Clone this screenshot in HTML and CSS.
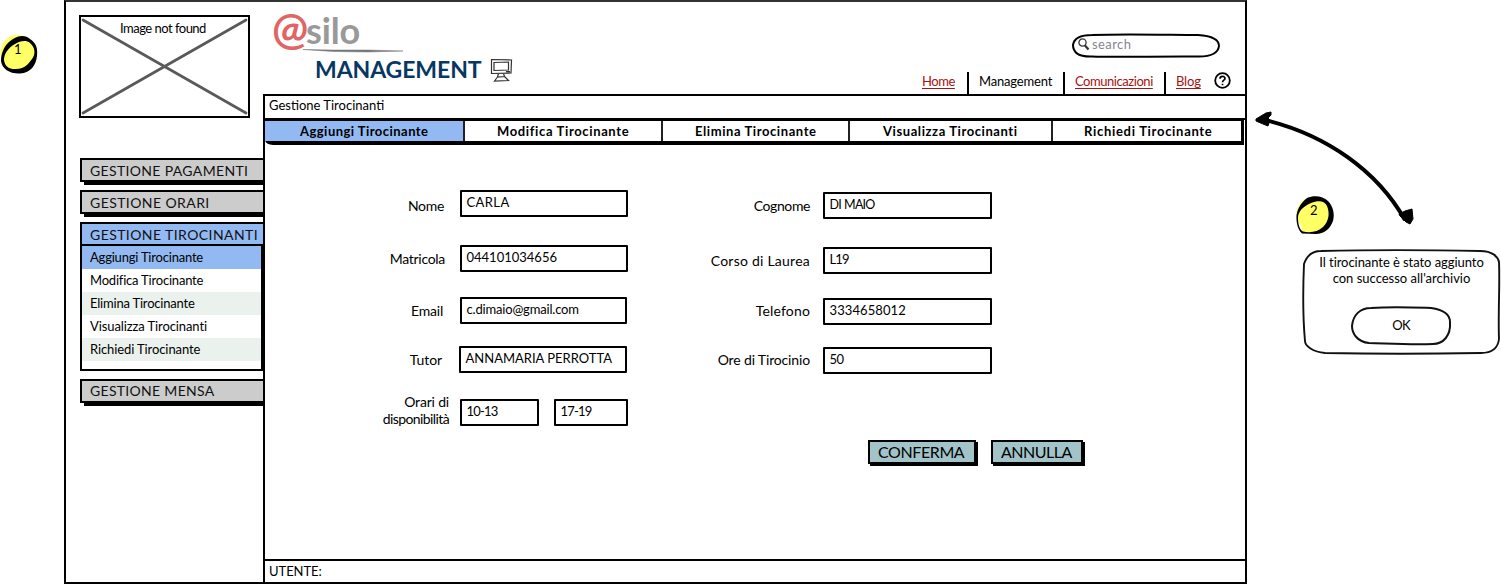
FILE: index.html
```html
<!DOCTYPE html>
<html lang="it">
<head>
<meta charset="utf-8">
<title>@silo Management</title>
<link rel="stylesheet" href="styles.css">
</head>
<body>
<div class="canvas">
  <div class="gutter">
    <div class="note note-one">
      <svg class="note-shape" viewBox="0 0 38 41"><ellipse cx="17" cy="18" rx="16.5" ry="17" fill="#ffff66"/><ellipse cx="18.500" cy="21" rx="17" ry="17.500" fill="#ffff66"/><path fill-rule="evenodd" d="M13 5C19 1 26 1 30 5C36 9 38 14 37 22C36 31 31 39 20 39.500C10 40 2 35 1 27C1 17 6 9 13 5ZM15 10C8 14 4 20 4 26C5 33 10 35.500 16 35C25 35 29 29 32 25C36 20 35 13 30 9C26 5.500 20 7 15 10Z"/></svg>
      <span class="note-num">1</span>
    </div>
  </div>

  <div class="frame">
    <aside class="sidebar">
      <div class="image-box">
        <svg class="cross" viewBox="0 0 171 103"><path d="M4 5L167 98M4 98L167 5" stroke="#595959" stroke-width="2.700" stroke-linecap="round"/></svg>
        <span class="image-text">Image not found</span>
      </div>
      <div class="menu">
        <div class="menu-button pagamenti">GESTIONE PAGAMENTI</div>
        <div class="menu-button orari">GESTIONE ORARI</div>
        <div class="menu-group">
          <div class="menu-button active">GESTIONE TIROCINANTI</div>
          <ul class="submenu">
            <li class="selected">Aggiungi Tirocinante</li>
            <li>Modifica Tirocinante</li>
            <li class="stripe">Elimina Tirocinante</li>
            <li class="visualizza">Visualizza Tirocinanti</li>
            <li class="stripe richiedi">Richiedi Tirocinante</li>
          </ul>
        </div>
        <div class="menu-button mensa">GESTIONE MENSA</div>
      </div>
    </aside>

    <div class="main">
      <header class="header">
        <div class="brand">
          <div class="logo"><span class="logo-at">@</span><span class="logo-name">silo</span></div>
          <svg class="swash" viewBox="0 0 101 4"><path d="M0 .5L30 1L65 1L100 2L65 3L30 2.500Z" fill="#777" stroke="#777" stroke-width=".5"/></svg>
          <div class="title-row">
            <span class="title">MANAGEMENT</span>
            <svg class="monitor" viewBox="0 0 23 25" fill="none" stroke="#333" stroke-width="1.200"><path d="M1.500 1.500L21.500 2L21 15L1.500 15.500ZM4 4.500L18.500 4V12L4 12.500ZM8.500 15.500L7.500 19L14.500 18.500L13.500 15.500M7.500 19L4.500 23L18.500 22.500L14.500 18.500M16 13.700H20"/></svg>
          </div>
        </div>
        <div class="header-right">
          <div class="search">
            <svg class="search-shape" viewBox="0 0 148 25"><path d="M20 2C55 .500 100 2 126 2C142 3 147 8 147 13C146 21 138 23.500 127 23.500C90 23 50 24.500 20 23.500C6 24 1 19 1 12C2 5 8 2 20 2Z" fill="#fff" stroke="#000" stroke-width="2"/></svg>
            <svg class="lens" viewBox="0 0 12 13" fill="none"><circle cx="4.500" cy="4.500" r="3.600" stroke="#333" stroke-width="1.300"/><path d="M7 7.500L10.500 11.500" stroke="#333" stroke-width="2.200"/></svg>
            <span class="search-text">search</span>
          </div>
          <nav class="nav">
            <a class="nav-home">Home</a><i class="sep"></i>
            <span class="nav-man">Management</span><i class="sep"></i>
            <a class="nav-com">Comunicazioni</a><i class="sep"></i>
            <a class="nav-blog">Blog</a>
            <svg class="help" viewBox="0 0 17 17" fill="none" stroke="#000"><circle cx="8.500" cy="8.500" r="7.300" stroke-width="1.800"/><path d="M6 6.800C6 3.600 11 3.700 11 6.500C11 8.200 8.500 8.200 8.500 10.300M8.500 11.700V13.300" stroke-width="1.700"/></svg>
          </nav>
        </div>
      </header>

      <section class="panel">
        <div class="crumb">Gestione Tirocinanti</div>
        <div class="tabs">
          <div class="tab tab-add">Aggiungi Tirocinante</div>
          <div class="tab tab-edit">Modifica Tirocinante</div>
          <div class="tab tab-del">Elimina Tirocinante</div>
          <div class="tab tab-view">Visualizza Tirocinanti</div>
          <div class="tab tab-ask">Richiedi Tirocinante</div>
        </div>
        <div class="form">
          <div class="column left">
            <div class="row nome"><label>Nome</label><div class="field">CARLA</div></div>
            <div class="row matricola"><label>Matricola</label><div class="field">044101034656</div></div>
            <div class="row email"><label>Email</label><div class="field">c.dimaio@gmail.com</div></div>
            <div class="row tutor"><label>Tutor</label><div class="field">ANNAMARIA PERROTTA</div></div>
            <div class="row hours"><label><span class="hours-a">Orari di</span><br>disponibilità</label><div class="field from">10-13</div><div class="field to">17-19</div></div>
          </div>
          <div class="column right">
            <div class="row cognome"><label>Cognome</label><div class="field">DI MAIO</div></div>
            <div class="row corso"><label>Corso di Laurea</label><div class="field">L19</div></div>
            <div class="row telefono"><label>Telefono</label><div class="field">3334658012</div></div>
            <div class="row ore"><label>Ore di Tirocinio</label><div class="field">50</div></div>
            <div class="actions">
              <div class="action confirm">CONFERMA</div>
              <div class="action cancel">ANNULLA</div>
            </div>
          </div>
        </div>
        <footer class="footer">UTENTE:</footer>
      </section>
    </div>
  </div>

  <div class="notes">
    <svg class="arrow" viewBox="0 0 160 116"><path d="M13 9C79 24 130 62 157 110" fill="none" stroke="#000" stroke-width="4"/><path d="M8 9L18 3L23 2L23 5L20 8L22 10L20 16L15 14L8 11Z" stroke="#000" stroke-linejoin="round"/><path d="M151 104L157 101L164 99L165 109L162 114L158 112L152 106Z" stroke="#000" stroke-linejoin="round"/></svg>
    <div class="note note-two">
      <svg class="note-shape" viewBox="0 0 38 41"><circle cx="17.500" cy="19" r="17" fill="#ffff66"/><path d="M4 21L17 6L33 12L33 30L20 37L6 37Z" fill="#ffff66"/><path fill-rule="evenodd" d="M11 3C18 0 27 1 32 6C37 11 39 19 37 26C34 34 28 39 20 39L6 38.500C2 35 0 28 .500 20C2 12 6 7 11 3ZM15 8C6 12 2 17 2 23C2 30 4 35 7 36.500C14 38 22 37 27 32C33 26 34 18 31 11C29 5.500 22 5 15 8Z"/></svg>
      <span class="note-num">2</span>
    </div>
    <div class="dialog">
      <svg class="dialog-shape" viewBox="0 0 199 106"><path d="M19 2C80 .500 130 1 178 2C191 2 196 8 197 13C198 35 196 65 197 90C196 99 191 104 179 104C125 105 70 105 23 104C11 103 3 97 3 92C.500 65 1 38 2 15C5 6 10 2 19 2Z" fill="#fff" stroke="#111" stroke-width="1.900"/></svg>
      <p class="message"><span class="msg-a">Il tirocinante è stato aggiunto</span><br><span class="msg-b">con successo all'archivio</span></p>
      <div class="ok">
        <svg class="ok-shape" viewBox="0 0 100 39"><path d="M20 2C43 .500 65 1.500 80 2C94 4 99 9 99 16C100 30 92 38 82 38C60 39 37 37.500 18 37C6 36 1 27 1 20C2 9 9 2 20 2Z" fill="#fff" stroke="#111" stroke-width="2"/></svg>
        <span class="ok-text">OK</span>
      </div>
    </div>
  </div>
</div>
</body>
</html>
```
FILE: styles.css
```css
* { box-sizing: border-box; }
body { margin: 0; background: #fff; color: #000; font: 13px/16px Lato, "Liberation Sans", sans-serif; white-space: nowrap; }
svg { display: block; overflow: visible; }
.canvas { display: flex; width: 1501px; height: 584px; overflow: hidden; }

/* Numbered annotations */
.gutter { width: 64px; padding-top: 34px; }
.note { position: relative; width: 38px; height: 40px; }
.note-shape { width: 38px; height: 41px; }
.note-num { position: absolute; left: 14px; top: 7px; }
.note-two .note-num { left: 14px; }

/* Window */
.frame { display: flex; width: 1183px; height: 584px; border: 2px solid #000; border-top-color: #333; }
.sidebar { width: 197px; padding: 13px 0 0 13px; }
.image-box { position: relative; width: 171px; height: 103px; border: 2.5px solid #000; }
.cross { position: absolute; left: -2px; top: -2px; width: 171px; height: 103px; }
.image-text { position: absolute; left: 39px; top: 3px; letter-spacing: -.51px; }

.menu { display: flex; flex-direction: column; gap: 5px; margin: 40px 0 0 1px; }
.menu-button { position: relative; height: 27px; padding: 3px 0 0 8px; border: solid #000; border-width: 2px 0 5px 2px; background: #ccc; color: #111; font-size: 14px; letter-spacing: .34px; }
.menu-button::before { content: ""; position: absolute; left: -2px; bottom: -5px; width: 4px; height: 3px; background: #fff; }
.menu-button.orari, .menu-button.active { letter-spacing: .42px; }
.menu-button.active { height: 24px; border-bottom-width: 2px; background: #93b9f2; }
.menu-button.active::before { display: none; }
.menu-button.mensa { margin-top: 3px; padding-top: 2px; letter-spacing: .3px; }
.submenu { width: 183px; height: 127px; margin: -2px 0 0; padding: 0; list-style: none; border: 2px solid #000; }
.submenu li { height: 23px; padding: 3px 0 0 8px; letter-spacing: -.2px; }
.submenu .selected { background: #93b9f2; }
.submenu .stripe { background: #ebf2ee; }
.submenu .visualizza, .submenu .richiedi { letter-spacing: -.1px; }

.main { display: flex; flex-direction: column; width: 982px; }
.header { display: flex; justify-content: space-between; height: 92px; }
.brand { padding: 7px 0 0 10px; }
.logo { display: flex; height: 40px; }
.logo-at { width: 34px; margin-left: -1px; color: #e06666; font-size: 43px; line-height: 39px; font-weight: 700; }
.logo-name { color: #999; font-weight: 700; font-size: 36px; line-height: 42px; letter-spacing: -.1px; }
.swash { width: 101px; height: 4px; margin-left: 30px; }
.title-row { display: flex; align-items: flex-start; margin: 2px 0 0 42px; }
.title { width: 175px; line-height: 28px; font-size: 23px; font-weight: 700; letter-spacing: -.08px; color: #073763; }
.monitor { width: 23px; height: 25px; margin-top: 3px; }
.header-right { display: flex; flex-direction: column; align-items: flex-end; padding-top: 31px; }
.search { position: relative; display: flex; width: 148px; height: 25px; margin-right: 25px; padding: 4px 0 0 6px; }
.search-shape { position: absolute; left: 0; top: 0; width: 148px; height: 25px; }
.lens { position: relative; width: 12px; height: 13px; margin-top: 1px; }
.search-text { position: relative; margin-left: 2px; color: #858590; letter-spacing: .42px; line-height: 15px; }
.nav { display: flex; align-items: flex-end; height: 22px; margin: 15px 14px 0 0; }
.nav > a, .nav > span { height: 22px; padding-top: 1px; }
.nav a { color: #a61212; text-decoration: underline; text-underline-offset: 2px; }
.nav-home { width: 45px; letter-spacing: -.45px; }
.nav-man { width: 94px; padding-left: 10px; letter-spacing: -.18px; }
.nav-com { width: 99px; padding-left: 10px; letter-spacing: -.45px; }
.nav-blog { width: 48px; padding-left: 10px; letter-spacing: -.15px; }
.sep { width: 2px; height: 22px; background: #000; }
.help { width: 17px; height: 17px; margin-bottom: 5px; }

/* Panel */
.panel { display: flex; flex-direction: column; flex: 1; border-left: 2px solid #000; border-top: 2px solid #000; }
.crumb { height: 24px; padding: 1px 0 0 4px; border-bottom: 2px solid #000; letter-spacing: 0; }
.tabs { display: flex; width: 979px; height: 25px; border: solid #000; border-width: 1px 3px 4px 0; border-bottom-left-radius: 8px 5px; }
.tab { padding-top: 2px; border-right: 2px solid #222; font-weight: 700; letter-spacing: .58px; }
.tab-add { width: 200px; padding-left: 35px; background: #93b9f2; letter-spacing: .46px; }
.tab-edit { width: 198px; padding-left: 32px; letter-spacing: .64px; }
.tab-del { width: 187px; padding-left: 32px; }
.tab-view { width: 203px; padding-left: 33px; }
.tab-ask { flex: 1; padding-left: 31px; border-right: 0; letter-spacing: .7px; }

.form { display: flex; flex: 1; }
.column { display: flex; flex-direction: column; }
.left { width: 363px; padding-top: 45px; }
.right { padding-top: 47px; }
.row { display: flex; height: 27px; }
.row label { text-align: right; font-size: 14px; }
.left label { width: 184px; margin-right: 11px; }
.right label { width: 182px; margin-right: 13px; }
.field { width: 168px; height: 27px; padding: 2px 0 0 4.5px; border: 2px solid #000; border-radius: 1px; }

.nome label { padding: 8px 5px 0 0; letter-spacing: -.3px; }
.nome .field { letter-spacing: .4px; }
.matricola { margin-top: 28px; }
.matricola label { padding: 6px 4px 0 0; letter-spacing: -.3px; }
.email { margin-top: 25px; }
.email label { padding: 6px 6px 0 0; letter-spacing: -.22px; }
.email .field { width: 167px; letter-spacing: -.18px; }
.tutor { margin-top: 22px; }
.tutor label { padding: 6px 7px 0 0; margin-right: 10px; letter-spacing: -.1px; }
.hours { margin-top: 26px; }
.hours label { margin-top: -6px; line-height: 17px; letter-spacing: -.6px; }
.hours-a { letter-spacing: -.18px; }
.hours .field { letter-spacing: -.8px; }
.hours .from { width: 79px; }
.hours .to { width: 74px; margin-left: 15px; }

.right .field { width: 169px; }
.cognome label { padding-top: 6px; letter-spacing: -.4px; }
.cognome .field { padding-top: 3px; font-size: 12.5px; letter-spacing: -.75px; word-spacing: .6px; }
.corso { margin-top: 28px; }
.corso label { padding-top: 6px; letter-spacing: .24px; }
.corso .field { letter-spacing: -.9px; }
.telefono { margin-top: 24px; }
.telefono label { padding-top: 5px; letter-spacing: .15px; }
.telefono .field { letter-spacing: .1px; }
.ore { margin-top: 22px; }
.ore label { padding-top: 5px; letter-spacing: -.15px; }
.ore .field { letter-spacing: -.5px; }

.actions { display: flex; gap: 15px; margin: 66px 0 0 240px; }
.action { height: 24px; padding: 0 0 0 8px; border: 2px solid #000; background: #a2c4c9; box-shadow: 2px 2px 0 #000; font-size: 16px; line-height: 19px; }
.confirm { width: 108px; letter-spacing: -.4px; }
.cancel { width: 92px; letter-spacing: -.5px; }
.footer { height: 23px; padding: 2px 0 0 4px; border-top: 2px solid #000; letter-spacing: -.05px; }

/* Arrow and confirmation dialog */
.notes { position: relative; width: 254px; }
.arrow { width: 160px; height: 116px; margin: 110px 0 0 1px; }
.note-two { margin: -31px 0 0 49px; }
.dialog { position: relative; width: 199px; height: 106px; margin: 14px 0 0 55px; padding-top: 5px; text-align: center; }
.dialog-shape { position: absolute; left: 0; top: 0; width: 199px; height: 106px; }
.message { position: relative; margin: 0; }
.msg-a { letter-spacing: -.06px; }
.ok { position: relative; width: 100px; height: 39px; margin: 20px 0 0 49px; padding-top: 11px; }
.ok-shape { position: absolute; left: 0; top: 0; width: 100px; height: 39px; }
.ok-text { position: relative; letter-spacing: -.8px; }
```
